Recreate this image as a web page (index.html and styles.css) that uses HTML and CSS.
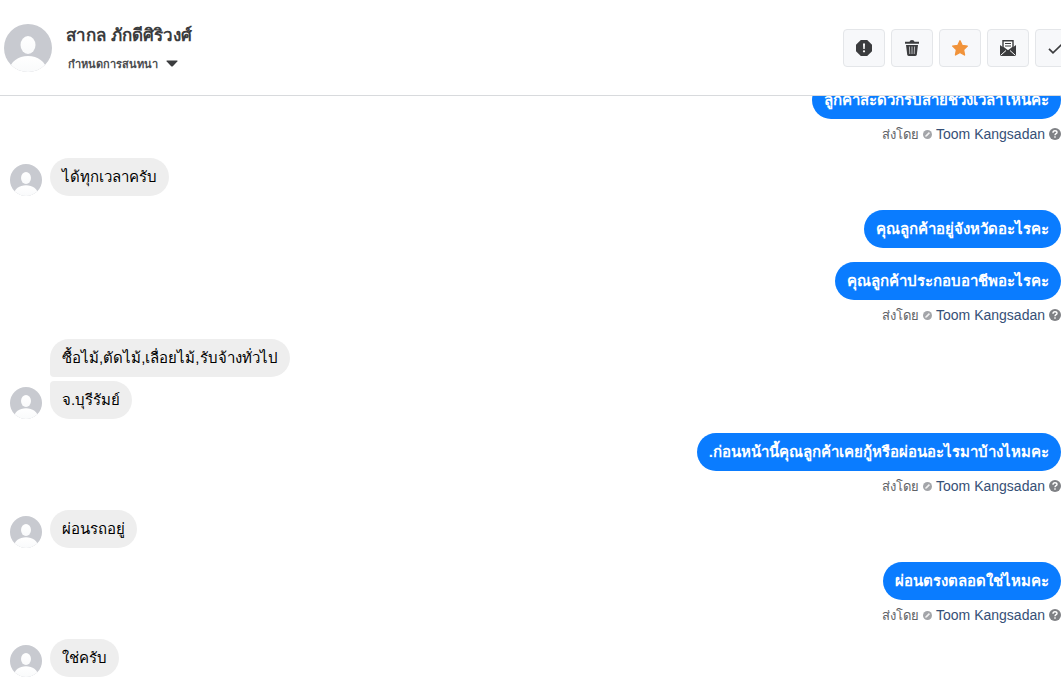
FILE: index.html
```html
<!DOCTYPE html>
<html lang="th">
<head>
    <meta charset="UTF-8">
    <meta name="viewport" content="width=device-width, initial-scale=1.0">
    <title>สากล ภักดีศิริวงศ์</title>
    <link rel="stylesheet" href="styles.css">
</head>
<body>

<!-- shared shapes -->
<svg class="defs" aria-hidden="true">
    <defs>
        <clipPath id="round"><circle cx="24" cy="24" r="24"/></clipPath>
        <linearGradient id="fade" x1="0" y1="0" x2="0" y2="1">
            <stop offset="0" stop-color="#fff"/>
            <stop offset="1" stop-color="#f9fafb"/>
        </linearGradient>
        <symbol id="person" viewBox="0 0 48 48">
            <g clip-path="url(#round)">
                <rect width="48" height="48" fill="#c8cad0"/>
                <ellipse cx="24" cy="21" rx="7.5" ry="9"/>
                <path d="M4 48C7 37 14 32 24 32s17 5 20 16z"/>
            </g>
        </symbol>
        <symbol id="pencil" viewBox="0 0 10 10">
            <circle cx="5" cy="5" r="5" fill="#a3a5a9"/>
            <path d="M2.4 7.6l.5-1.8 3.6-3.6 1.3 1.3-3.6 3.6z" fill="#f2f2f2"/>
        </symbol>
        <symbol id="help" viewBox="0 0 12 12">
            <circle cx="6" cy="6" r="6" fill="#7f8185"/>
            <path d="M4 4.7C4 3.4 4.8 2.7 6 2.7s2 .7 2 1.7C8 5.7 6 5.7 6 7.2M6 8.3v1.4" fill="none" stroke="#fff" stroke-width="1.4"/>
        </symbol>
    </defs>
</svg>

<header class="header">
    <svg class="avatar avatar-large"><use href="#person"/></svg>
    <div class="contact">
        <h1>สากล ภักดีศิริวงศ์</h1>
        <button class="assign">กำหนดการสนทนา
            <svg width="12" height="7" viewBox="0 0 12 7"><path d="M1 .5h10q1 .2.3 1L6.8 6.2q-.8.7-1.6 0L.7 1.5Q0 .7 1 .5z" fill="#3b3c3e"/></svg>
        </button>
    </div>
    <div class="actions">
        <button aria-label="Spam">
            <svg width="16" height="16" viewBox="0 0 16 16"><path d="M4.8 0h6.4L16 4.8v6.4L11.2 16H4.8L0 11.2V4.8z" fill="#3b3c3e"/><path d="M7 3.5h2l-.3 5.5H7.3z" fill="#fff"/><circle cx="8" cy="11.3" r="1.1" fill="#fff"/></svg>
        </button>
        <button aria-label="Delete">
            <svg width="16" height="16" viewBox="0 0 16 16"><path d="M1 1.8h4.5Q5.8 0 8 0t2.5 1.8H15v2H1z" fill="#3b3c3e"/><path d="M2 5h12l-1.2 9.5Q12.6 16 11 16H5q-1.6 0-1.8-1.5z" fill="#3b3c3e"/><path d="M5.4 6.5l.4 7.5M8 6.5V14M10.6 6.5l-.4 7.5" stroke="#b9babd" stroke-width="1"/></svg>
        </button>
        <button aria-label="Follow up">
            <svg width="16" height="16" viewBox="0 0 16 16"><path d="M8 .8l2.2 4.7 5.1.6-3.8 3.6 1 5.3L8 12.5 3.5 15l1-5.3L.7 6.1l5.1-.6z" fill="#f1933a" stroke="#f1933a" stroke-width="1.4" stroke-linejoin="round"/></svg>
        </button>
        <button aria-label="Mark as unread">
            <svg width="16" height="16" viewBox="0 0 16 16"><path d="M0 5l8 6 8-6v9.5q0 1.5-1.5 1.5h-13Q0 16 0 14.5z" fill="#3b3c3e"/><path d="M3 .7h10v6.5L8 11 3 7.2z" fill="#fff" stroke="#3b3c3e" stroke-width="1.4"/><path d="M5 3.5h6M5 6h6" stroke="#3b3c3e" stroke-width="1.2"/><path d="M.8 15.2L6 10.5M15.2 15.2L10 10.5" stroke="#fff" stroke-width="1"/></svg>
        </button>
        <button aria-label="Done">
            <svg width="16" height="16" viewBox="0 0 16 16"><path d="M1 8.8l4 4L15 3.3" fill="none" stroke="#3b3c3e" stroke-width="1.7"/></svg>
        </button>
    </div>
</header>

<main class="thread">
    <div class="group sent">
        <p class="bubble">ลูกค้าสะดวกรับสายช่วงเวลาไหนคะ</p>
    </div>
    <div class="sender"><span>ส่งโดย</span> <svg width="9" height="9"><use href="#pencil"/></svg> <a href="#">Toom Kangsadan</a> <svg width="12" height="12"><use href="#help"/></svg></div>

    <div class="group received">
        <svg class="avatar"><use href="#person"/></svg>
        <p class="bubble">ได้ทุกเวลาครับ</p>
    </div>

    <div class="group sent spaced">
        <p class="bubble">คุณลูกค้าอยู่จังหวัดอะไรคะ</p>
    </div>
    <div class="group sent spaced">
        <p class="bubble">คุณลูกค้าประกอบอาชีพอะไรคะ</p>
    </div>
    <div class="sender"><span>ส่งโดย</span> <svg width="9" height="9"><use href="#pencil"/></svg> <a href="#">Toom Kangsadan</a> <svg width="12" height="12"><use href="#help"/></svg></div>

    <div class="group received">
        <svg class="avatar"><use href="#person"/></svg>
        <div class="stack">
            <p class="bubble first">ซื้อไม้,ตัดไม้,เลื่อยไม้,รับจ้างทั่วไป</p>
            <p class="bubble last">จ.บุรีรัมย์</p>
        </div>
    </div>

    <div class="group sent spaced">
        <p class="bubble">.ก่อนหน้านี้คุณลูกค้าเคยกู้หรือผ่อนอะไรมาบ้างไหมคะ</p>
    </div>
    <div class="sender"><span>ส่งโดย</span> <svg width="9" height="9"><use href="#pencil"/></svg> <a href="#">Toom Kangsadan</a> <svg width="12" height="12"><use href="#help"/></svg></div>

    <div class="group received">
        <svg class="avatar"><use href="#person"/></svg>
        <p class="bubble">ผ่อนรถอยู่</p>
    </div>

    <div class="group sent spaced">
        <p class="bubble">ผ่อนตรงตลอดใช่ไหมคะ</p>
    </div>
    <div class="sender"><span>ส่งโดย</span> <svg width="9" height="9"><use href="#pencil"/></svg> <a href="#">Toom Kangsadan</a> <svg width="12" height="12"><use href="#help"/></svg></div>

    <div class="group received">
        <svg class="avatar"><use href="#person"/></svg>
        <p class="bubble">ใช่ครับ</p>
    </div>
</main>

</body>
</html>
```
FILE: styles.css
```css
* {
    box-sizing: border-box;
}
body {
    margin: 0;
    height: 100vh;
    display: flex;
    flex-direction: column;
    overflow: hidden;
    background: #fff;
    color: #000;
    font-family: "Liberation Sans", "Noto Sans", sans-serif;
}
button {
    font-family: inherit;
    cursor: pointer;
}
.defs {
    position: absolute;
    width: 0;
    height: 0;
}
.header {
    display: flex;
    align-items: center;
    flex-shrink: 0;
    height: 96px;
    padding-left: 4px;
    border-bottom: 1px solid #d8dadd;
}
.avatar {
    width: 32px;
    height: 32px;
    flex-shrink: 0;
    fill: url(#fade);
}
.avatar-large {
    width: 48px;
    height: 48px;
}
.contact {
    flex: 1;
    margin-left: 14px;
}
.contact h1 {
    margin: 0 0 4px;
    font-size: 17px;
    line-height: 28px;
    color: #3b3c3e;
}
.assign {
    display: flex;
    align-items: center;
    gap: 8px;
    padding: 0 2px;
    border: none;
    background: none;
    font-size: 11px;
    font-weight: bold;
    line-height: 20px;
    color: #4b4c4f;
}
/* the toolbar runs past the right edge of the pane */
.actions {
    display: flex;
    gap: 6px;
    margin-right: -16px;
}
.actions button {
    display: flex;
    align-items: center;
    justify-content: center;
    width: 42px;
    height: 38px;
    padding: 0;
    border: 1px solid #e4e6e9;
    border-radius: 4px;
    background: #f7f8fa;
}
/* newest message stays at the bottom */
.thread {
    flex: 1;
    min-height: 0;
    display: flex;
    flex-direction: column;
    justify-content: flex-end;
    padding-bottom: 13px;
    overflow: hidden;
}
.group {
    display: flex;
    flex-shrink: 0;
    align-items: flex-end;
    gap: 8px;
}
.received {
    padding-left: 10px;
}
.sent {
    justify-content: flex-end;
}
.spaced {
    margin-top: 14px;
}
.stack {
    display: flex;
    flex-direction: column;
    align-items: flex-start;
    gap: 4px;
}
.bubble {
    margin: 0;
    height: 38px;
    padding: 0 12px;
    border-radius: 19px;
    background: #eee;
    font-size: 15px;
    line-height: 38px;
    white-space: nowrap;
}
.first {
    border-bottom-left-radius: 4px;
}
.last {
    border-top-left-radius: 4px;
}
.sent .bubble {
    background: #0a7cff;
    color: #fff;
    font-weight: bold;
}
.sender {
    display: flex;
    flex-shrink: 0;
    align-items: center;
    justify-content: flex-end;
    gap: 4px;
    height: 39px;
    padding-bottom: 9px;
    font-size: 14px;
    color: #606266;
}
.sender span {
    font-size: 13px;
}
.sender a {
    color: #365076;
    text-decoration: none;
}
```
